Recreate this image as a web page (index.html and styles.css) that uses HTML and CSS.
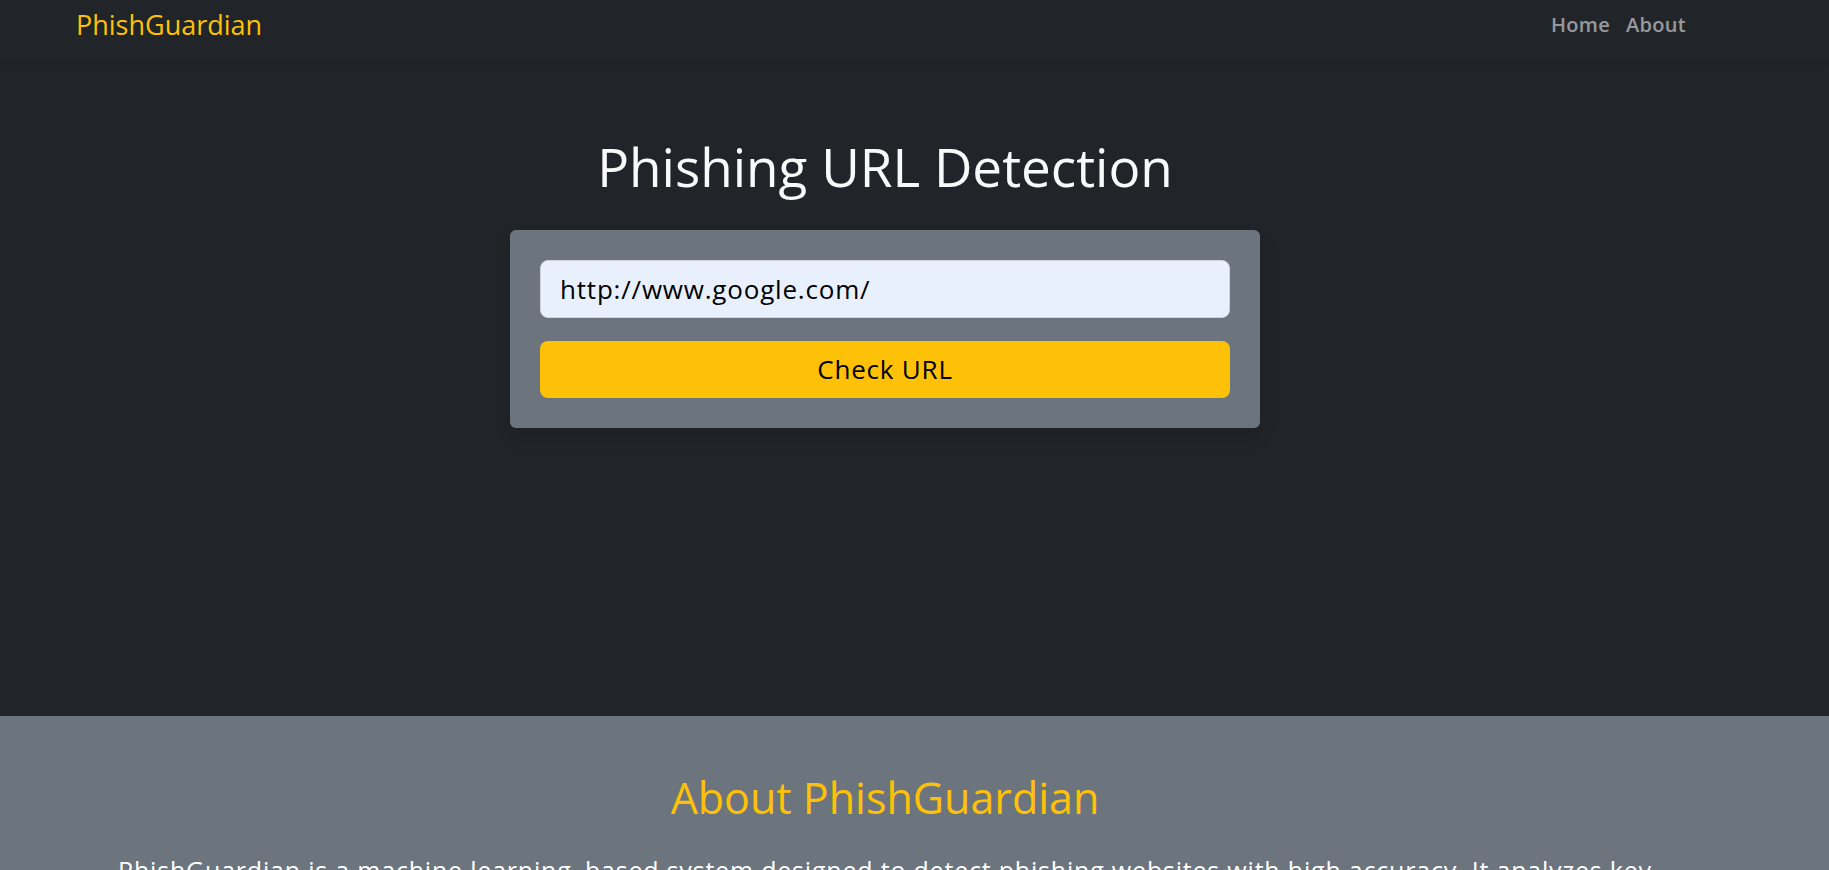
FILE: index.html
```html
<!DOCTYPE html>
<html lang="en">
<head>
<meta charset="utf-8">
<title>PhishGuardian</title>
<link rel="stylesheet" href="styles.css">
</head>
<body>
<nav class="navbar">
  <div class="container nav-inner">
    <a class="brand" href="#">PhishGuardian</a>
    <ul class="nav-links">
      <li><a href="#">Home</a></li>
      <li><a href="#">About</a></li>
    </ul>
  </div>
</nav>
<section class="hero">
  <div class="container hero-inner">
    <h1 class="hero-title">Phishing URL Detection</h1>
    <form class="check-card">
      <input class="url-input" type="text" value="http://www.google.com/">
      <button class="check-btn" type="button">Check URL</button>
    </form>
  </div>
</section>
<section class="about">
  <div class="container about-inner">
    <h2 class="about-title">About PhishGuardian</h2>
    <p class="about-text">PhishGuardian is a machine learning–based system designed to detect phishing websites with high accuracy. It analyzes key features of a URL, such as its length, special characters, domain age and HTTPS usage, to decide whether a link is safe or malicious.</p>
    <p class="about-text">Enter any URL above and PhishGuardian will instantly tell you whether it looks legitimate or like a phishing attempt, helping you stay safe online.</p>
  </div>
</section>
<footer class="footer">
  <div class="container footer-inner">© 2024 PhishGuardian. All rights reserved.</div>
</footer>
</body>
</html>
```

FILE: styles.css
```css
* { box-sizing: border-box; }
html, body { margin: 0; padding: 0; }
body {
  font-family: "Open Sans", "Noto Sans", sans-serif;
  background: #212529;
  color: #f8f9fa;
}
.container {
  width: 1642px;
  margin-left: 64px;
  padding: 0 12px;
}
.navbar {
  background: #212529;
  height: 60px;
  box-shadow: 0 2px 4px rgba(0,0,0,0.12);
  position: relative;
  z-index: 1;
}
.nav-inner {
  height: 60px;
  padding-bottom: 11px;
  display: flex;
  align-items: center;
  justify-content: space-between;
}
.brand {
  color: #ffc107;
  text-decoration: none;
  font-size: 27px;
  font-weight: 500;
}
.nav-links {
  list-style: none;
  margin: 0;
  padding: 0;
  display: flex;
}
.nav-links a {
  display: block;
  padding: 8px;
  color: rgba(255,255,255,0.55);
  text-decoration: none;
  font-size: 20px;
  font-weight: 600;
  letter-spacing: 0.3px;
}
.hero {
  height: 656px;
}
.hero-inner {
  display: flex;
  flex-direction: column;
  align-items: center;
  padding-top: 75px;
}
.hero-title {
  margin: 0 0 31px;
  font-size: 53px;
  font-weight: 500;
  line-height: 1.2;
  color: #f8f9fa;
}
.check-card {
  width: 750px;
  background: #6c757d;
  border-radius: 6px;
  padding: 30px;
  box-shadow: 0 8px 16px rgba(0,0,0,0.15);
  display: flex;
  flex-direction: column;
  gap: 23px;
}
.url-input {
  height: 58px;
  border: 1px solid #ced4da;
  border-radius: 8px;
  background: #e8f0fe;
  padding: 0 19px;
  font-family: inherit;
  font-size: 26px;
  letter-spacing: 0.8px;
  color: #000;
}
.check-btn {
  height: 57px;
  border: none;
  border-radius: 8px;
  background: #ffc107;
  font-family: inherit;
  font-size: 26px;
  letter-spacing: 0.8px;
  color: #000;
}
.about {
  background: #6c757d;
  padding: 56px 0 60px;
}
.about-inner {
  display: flex;
  flex-direction: column;
  align-items: center;
}
.about-title {
  margin: 0 0 28px;
  color: #ffc107;
  font-size: 43px;
  font-weight: 500;
  line-height: 1.2;
}
.about-text {
  max-width: 1590px;
  margin: 0 0 16px;
  font-size: 25px;
  letter-spacing: 0.8px;
  line-height: 1.5;
  text-align: center;
  color: #fff;
}
.footer {
  background: #212529;
  padding: 24px 0;
  text-align: center;
  color: rgba(255,255,255,0.55);
}
.footer-inner { font-size: 16px; }
```
